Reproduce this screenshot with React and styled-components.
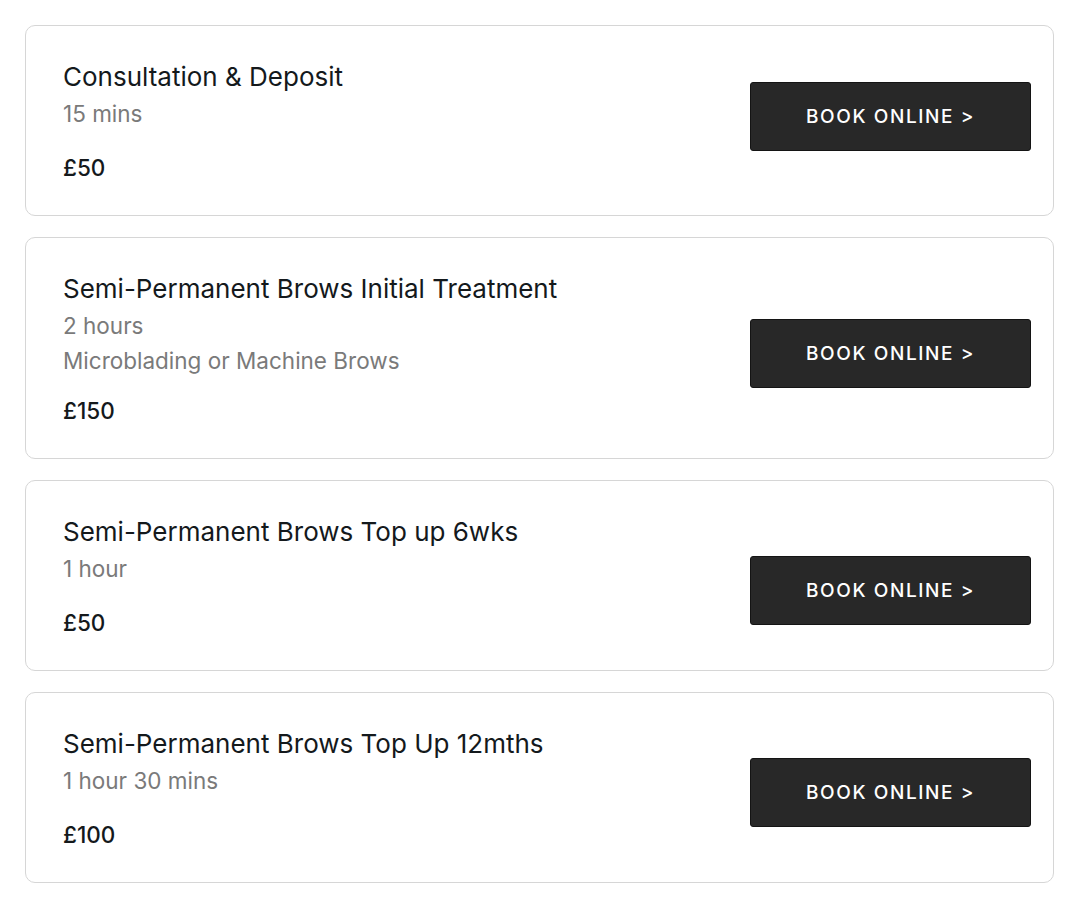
import React from 'react';
import styled, { createGlobalStyle } from 'styled-components';

const services = [
	{ title: 'Consultation & Deposit', duration: '15 mins', price: '£50', buttonTop: 25 },
	{ title: 'Semi-Permanent Brows Initial Treatment', duration: '2 hours', note: 'Microblading or Machine Brows', price: '£150', buttonTop: 50 },
	{ title: 'Semi-Permanent Brows Top up 6wks', duration: '1 hour', price: '£50', buttonTop: 44 },
	{ title: 'Semi-Permanent Brows Top Up 12mths', duration: '1 hour 30 mins', price: '£100', buttonTop: 34 }
];

export default function App() {
	return (
		<>
			<GlobalStyle />
			<List>
				{services.map((service) => (
					<Card key={service.title}>
						<Info>
							<Title>{service.title}</Title>
							<Detail>{service.duration}</Detail>
							{service.note && <Detail>{service.note}</Detail>}
							<Price $tight={!!service.note}>{service.price}</Price>
						</Info>
						<BookButton $top={service.buttonTop}>BOOK ONLINE &gt;</BookButton>
					</Card>
				))}
			</List>
		</>
	);
}

const GlobalStyle = createGlobalStyle`
	body {
		margin: 0;
		background: #fff;
		font-family: Inter, "Noto Sans", sans-serif;
		color: #14191c;
	}
`;

const List = styled.div`
	padding: 25px 36px 25px 25px;
	display: flex;
	flex-direction: column;
	gap: 21px;
`;

const Card = styled.div`
	display: flex;
	justify-content: space-between;
	align-items: flex-start;
	padding: 31px 22px 29px 37px;
	border: 1px solid #d6d6d6;
	border-radius: 10px;
`;

const Info = styled.div`
	display: flex;
	flex-direction: column;
`;

const Title = styled.div`
	font-size: 26px;
	line-height: 39px;
	font-weight: 400;
	color: #14191c;
`;

const Detail = styled.div`
	font-size: 22.5px;
	line-height: 35px;
	color: #7a7a7a;
`;

const Price = styled.div`
	margin-top: ${(p) => (p.$tight ? 15 : 19)}px;
	font-size: 22.5px;
	line-height: 36px;
	font-weight: 500;
	color: #14191c;
`;

const BookButton = styled.button`
	margin-top: ${(p) => p.$top}px;
	width: 281px;
	height: 69px;
	background: #282828;
	border: 1px solid #141414;
	border-radius: 3px;
	color: #fff;
	font-family: Inter, "Noto Sans", sans-serif;
	font-size: 19px;
	font-weight: 500;
	letter-spacing: 1.6px;
	cursor: pointer;
`;
